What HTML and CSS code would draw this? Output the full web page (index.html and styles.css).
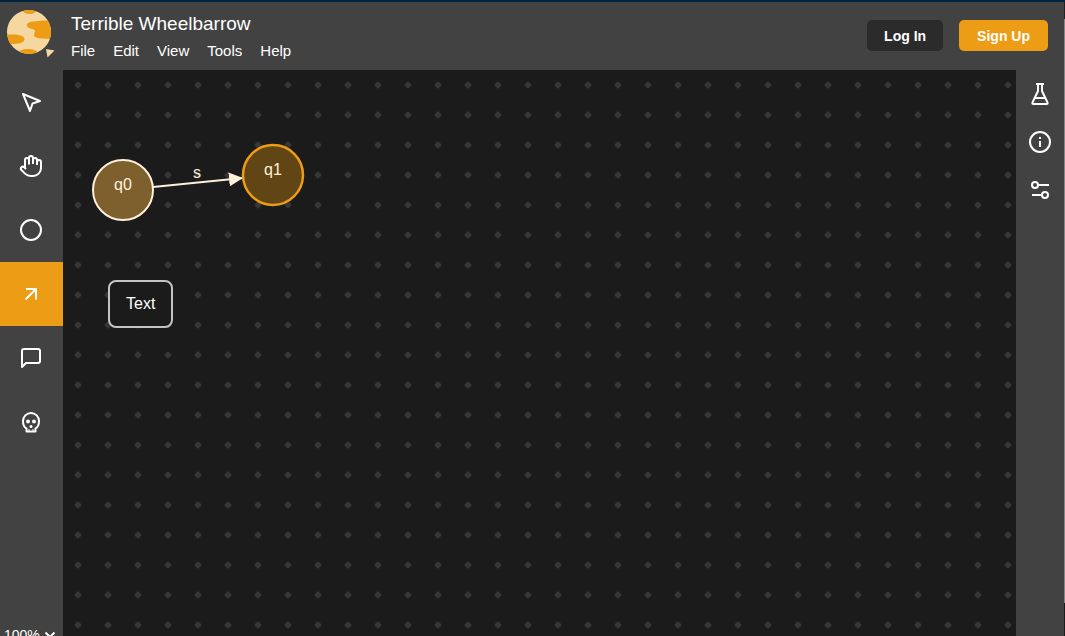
FILE: index.html
```html
<!DOCTYPE html>
<html lang="en">
<head>
<meta charset="utf-8">
<meta name="viewport" content="width=device-width, initial-scale=1">
<title>Terrible Wheelbarrow</title>
<link rel="stylesheet" href="styles.css">
</head>
<body>
<div class="window">
<div class="app">
  <header class="topbar">
    <a class="logo" href="#" aria-label="Home">
      <svg width="48" height="48" viewBox="0 0 48 48">
        <defs><clipPath id="planet"><circle cx="22" cy="22" r="22"/></clipPath></defs>
        <g clip-path="url(#planet)">
          <rect width="44" height="44" fill="#f7d7a0"/>
          <ellipse cx="22.500" cy="0" rx="7" ry="4" fill="#ed9c16"/>
          <path d="M44 10.500C36 10.500 30 11 26 11.500C21 12 19 14 20 16C21 19 27 18.500 28 20.500C28.500 22 26.500 23 27 25.500C28 28.500 33 28.500 44 29Z" fill="#ed9c16"/>
          <path d="M0 24.500C6 24.500 17 24 17.500 29C17.500 34 9 34 0 34Z" fill="#ed9c16"/>
          <ellipse cx="21" cy="43" rx="10" ry="4" fill="#ed9c16"/>
        </g>
        <path d="M39 39L47.500 40.500L40.500 47.500Z" fill="#f7d7a0"/>
      </svg>
    </a>
    <div class="heading">
      <h1 class="title">Terrible Wheelbarrow</h1>
      <nav class="menu" aria-label="Main menu">
        <button type="button">File</button>
        <button type="button">Edit</button>
        <button type="button">View</button>
        <button type="button">Tools</button>
        <button type="button">Help</button>
      </nav>
    </div>
    <div class="account">
      <button class="btn" type="button">Log In</button>
      <button class="btn btn-primary" type="button">Sign Up</button>
    </div>
  </header>

  <aside class="toolbar">
    <button class="tool" type="button" aria-label="Select">
      <svg class="icon" viewBox="0 0 24 24"><path d="M4 4L11 21L13.500 13.500L21 11Z"/></svg>
    </button>
    <button class="tool" type="button" aria-label="Pan">
      <svg class="icon" viewBox="0 0 24 24"><path d="M18 11V6a2 2 0 0 0-4 0M14 10V4a2 2 0 0 0-4 0v2M10 10.500V6a2 2 0 0 0-4 0v8"/><path d="M18 8a2 2 0 1 1 4 0v6a8 8 0 0 1-8 8h-2c-2.800 0-4.500-.86-5.990-2.340l-3.600-3.600a2 2 0 0 1 2.830-2.820L7 15"/></svg>
    </button>
    <button class="tool" type="button" aria-label="State">
      <svg class="icon" viewBox="0 0 24 24"><circle cx="12" cy="12" r="10"/></svg>
    </button>
    <button class="tool tool-active" type="button" aria-label="Transition" aria-pressed="true">
      <svg class="icon" viewBox="0 0 24 24"><path d="M6.500 17.500L17 7M7 7H17V17.500"/></svg>
    </button>
    <button class="tool" type="button" aria-label="Comment">
      <svg class="icon" viewBox="0 0 24 24"><path d="M21 15a2 2 0 0 1-2 2H7l-4 4V5a2 2 0 0 1 2-2h14a2 2 0 0 1 2 2z"/></svg>
    </button>
    <button class="tool" type="button" aria-label="Delete">
      <svg class="icon" viewBox="0 0 24 24"><path d="M7.500 21.500H16.500V18.500C18.500 17.500 20 15 20 11A8 8 0 0 0 4 11C4 15 5.500 17.500 7.500 18.500Z"/><g class="solid"><circle cx="9" cy="11.500" r="2"/><circle cx="15" cy="11.500" r="2"/><circle cx="12" cy="16.500" r="1.500"/><path d="M9.500 19h1v2H9.500zM13.500 19h1v2H13.500z"/></g></svg>
    </button>
    <div class="zoom">
      <select class="zoom-select" aria-label="Zoom level"><option>100%</option></select>
      <svg class="zoom-chevron" viewBox="0 0 12 12"><path d="M1.500 3.500L6 8L10.500 3.500"/></svg>
    </div>
  </aside>

  <main class="canvas">
    <svg class="graph" width="100%" height="100%">
      <defs>
        <pattern id="grid" width="30" height="30" patternUnits="userSpaceOnUse"><path d="M15 12.500L17.500 15L15 17.500L12.500 15Z" fill="#363636" stroke="#363636" stroke-width="2" stroke-linejoin="round"/></pattern>
        <marker id="arrow" viewBox="0 0 14 14" refX="14" refY="7" markerWidth="14" markerHeight="14" markerUnits="userSpaceOnUse" orient="auto"><path d="M0 0L14 7L0 14Z" fill="#fff0dc"/></marker>
      </defs>
      <rect width="100%" height="100%" fill="url(#grid)"/>
      <path d="M90 117L180 108" stroke="#fff0dc" stroke-width="2" marker-end="url(#arrow)"/>
      <text class="label" x="134" y="108">s</text>
      <circle cx="60" cy="120" r="30" fill="#7e5f2e" stroke="#fff0dc" stroke-width="2"/>
      <text class="label" x="60" y="120">q0</text>
      <circle cx="210" cy="105" r="30" fill="#614515" stroke="#ed9c16" stroke-width="2.500"/>
      <text class="label" x="210" y="105">q1</text>
    </svg>
    <div class="note">Text</div>
  </main>

  <aside class="panels">
    <button class="panel-button" type="button" aria-label="Testing lab">
      <svg class="icon" viewBox="0 0 24 24"><path d="M8 2H16M10 2V9L4.500 20.500Q4 22 5.500 22H18.500Q20 22 19.500 20.500L14 9V2M7 16H17"/></svg>
    </button>
    <button class="panel-button" type="button" aria-label="File info">
      <svg class="icon" viewBox="0 0 24 24"><circle cx="12" cy="12" r="10"/><path d="M12 11V17M12 7V9"/></svg>
    </button>
    <button class="panel-button" type="button" aria-label="Options">
      <svg class="icon" viewBox="0 0 24 24"><circle cx="7" cy="7" r="3"/><path d="M10 7H21M4 17H14"/><circle cx="17" cy="17" r="3"/></svg>
    </button>
  </aside>
</div>
<div class="scroll-edge"></div>
</div>
</body>
</html>
```
FILE: styles.css
```css
* {
  box-sizing: border-box;
}

body {
  margin: 0;
  background: #1b1b1b;
  color: #fff;
  font: 16px/20px "Liberation Sans", Arial, sans-serif;
}

button,
select {
  margin: 0;
  padding: 0;
  border: 0;
  background: none;
  color: inherit;
  font: inherit;
}

.window {
  display: grid;
  grid-template-columns: minmax(0, 1fr) 1px;
  height: 100vh;
  overflow: hidden;
  border-top: 2px solid #03243f;
}

.app {
  display: grid;
  grid-template: 68px minmax(0, 1fr) / 63px minmax(0, 1fr) 48px;
  min-height: 0;
  background: #424242;
}

.scroll-edge {
  background: linear-gradient(#222 17px, #858585 17px calc(100% - 33px), #1b1b1b calc(100% - 33px));
}

.topbar {
  grid-column: 1 / -1;
  display: flex;
  align-items: flex-start;
  padding: 8px 16px 0 7px;
}

.logo {
  display: flex;
  width: 48px;
  margin-right: 16px;
}

.logo svg {
  display: block;
}

.heading {
  padding-top: 2px;
}

.title {
  margin: 0 0 5px;
  font-size: 19px;
  font-weight: 400;
  line-height: 24px;
}

.menu {
  display: flex;
  gap: 18px;
  font-size: 15px;
}

.account {
  display: flex;
  gap: 16px;
  margin: 10px 0 0 auto;
}

.btn {
  padding: 6px 17px 5px;
  border-radius: 5px;
  background: #2b2b2b;
  font-size: 14px;
  font-weight: 700;
}

.btn-primary {
  padding-inline: 18px;
  background: #ed9c16;
}

.icon {
  display: block;
  width: 24px;
  height: 24px;
  fill: none;
  stroke: #fff;
  stroke-width: 2;
  stroke-linejoin: round;
}

.solid {
  fill: #fff;
  stroke: none;
}

.toolbar {
  display: flex;
  flex-direction: column;
  min-height: 0;
}

.tool {
  display: flex;
  flex: none;
  align-items: center;
  justify-content: center;
  height: 64px;
  padding-right: 1px;
}

.tool-active {
  background: #ed9c16;
}

.zoom {
  display: flex;
  align-items: center;
  margin: auto 0 -9px 4px;
  font-size: 14px;
}

.zoom-select {
  width: 40px;
  appearance: none;
}

.zoom-chevron {
  width: 12px;
  height: 12px;
  fill: none;
  stroke: #fff;
  stroke-width: 2;
}

.canvas {
  position: relative;
  min-width: 0;
  overflow: hidden;
  background: #1b1b1b;
}

.graph {
  display: block;
}

.label {
  fill: #fff0dc;
  font-size: 16px;
  text-anchor: middle;
}

.note {
  position: absolute;
  top: 210px;
  left: 45px;
  padding: 12px 16px;
  border: 2px solid #c4c4c4;
  border-radius: 8px;
  background: #1b1b1b;
}

.panels {
  display: flex;
  flex-direction: column;
}

.panel-button {
  display: flex;
  align-items: center;
  justify-content: center;
  height: 48px;
}
```
